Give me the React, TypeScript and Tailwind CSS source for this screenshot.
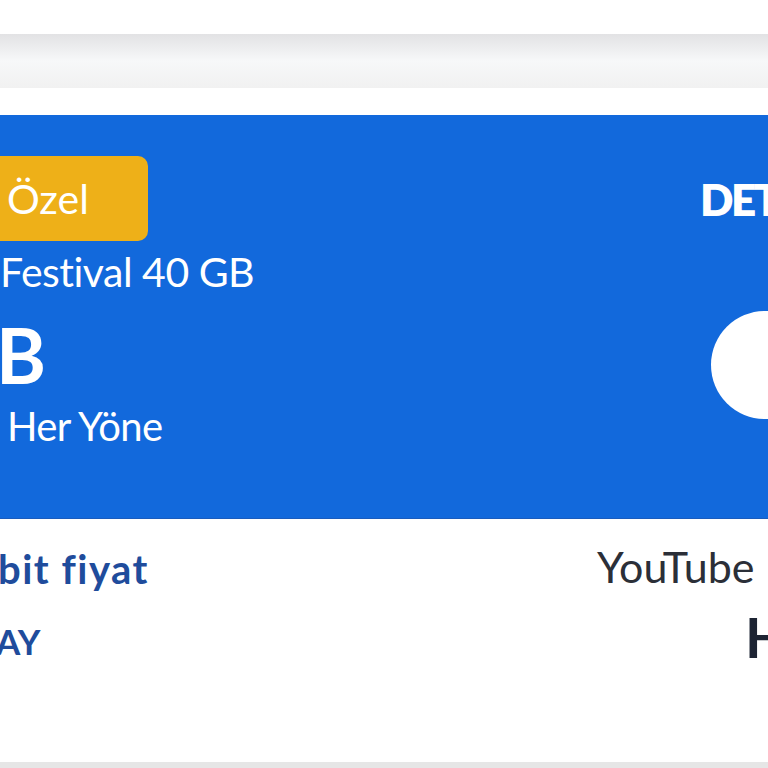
import React from 'react';

const PackageCard: React.FC = () => {
  return (
    <div className="relative h-[403px] overflow-hidden bg-[#1269dc] text-white">
      <div className="flex justify-between">
        <div className="flex flex-col pt-[41px]">
          <div className="-ml-[20px] flex h-[85px] w-[168px] items-center rounded-[10px] bg-[#eeb018] pl-[27px] text-[41px] leading-none">
            Özel
          </div>
          <div className="mt-[11px] text-[41px] leading-[40px] tracking-[-0.5px]">Festival 40 GB</div>
          <div className="mt-[27px] -ml-[4px] text-[76px] font-bold leading-[72px]">B</div>
          <div className="mt-[15px] ml-[7px] text-[40px] leading-[40px] tracking-[-0.6px]">Her Yöne</div>
        </div>
        <div className="flex w-[100px] shrink-0 flex-col items-start pt-[64px] -mr-[32px]">
          <div className="text-[44px] font-extrabold leading-[40px] tracking-[-2.5px]">DETAY</div>
          <div className="mt-[92px] ml-[11px] h-[108px] w-[108px] rounded-full bg-white" />
        </div>
      </div>
    </div>
  );
};

export default function App() {
  return (
    <div className="flex h-[768px] w-[768px] flex-col overflow-hidden bg-white font-['Lato',sans-serif]">
      <div className="h-[34px] shrink-0 bg-white" />
      <div className="h-[54px] shrink-0 bg-gradient-to-b from-[#e2e2e4] via-[#f7f8f9] to-[#f1f1f1]" />
      <div className="h-[27px] shrink-0 bg-white" />
      <div className="shrink-0 border-b border-[#1a5cbd]">
        <PackageCard />
      </div>
      <div className="flex flex-1 justify-between overflow-hidden">
        <div className="flex flex-col pt-[28px]">
          <div className="-ml-[2px] text-[40px] font-bold leading-[44px] tracking-[1.5px] text-[#1f4c9c]">bit fiyat</div>
          <div className="mt-[32px] -ml-[4px] text-[35px] font-bold leading-[36px] text-[#1f4c9c]">AY</div>
        </div>
        <div className="flex w-[172px] shrink-0 flex-col items-start pt-[26px] -mr-[1px]">
          <div className="text-[43px] leading-[44px] text-[#2b2f38]">YouTube</div>
          <div className="mt-[20px] ml-[148px] text-[56px] font-bold leading-[56px] text-[#1d2433]">H</div>
        </div>
      </div>
      <div className="h-[6px] shrink-0 bg-[#e6e6e6]" />
    </div>
  );
}
